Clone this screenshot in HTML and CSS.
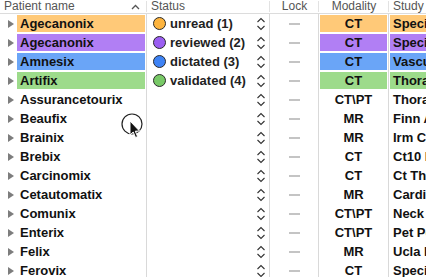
FILE: index.html
```html
<!DOCTYPE html>
<html>
<head>
<meta charset="utf-8">
<link rel="stylesheet" href="styles.css">
</head>
<body>
<div class="table">
  <div class="head">
    <div class="hc c-patient"><span>Patient name</span><svg class="sort" width="9" height="6" viewBox="0 0 9 6"><path d="M1 5 L4.5 1.5 L8 5" fill="none" stroke="#555" stroke-width="1.3"/></svg></div>
    <div class="hc c-status">Status</div>
    <div class="hc c-lock">Lock</div>
    <div class="hc c-mod">Modality</div>
    <div class="hc c-study">Study Description</div>
  </div>
  <div class="body" id="body"></div>
</div>
<svg class="cursor" width="30" height="34" viewBox="0 0 30 34">
  <circle cx="12" cy="11" r="10" fill="none" stroke="#222" stroke-width="1.2"/>
  <path d="M10 8 L10 22 L13.2 19 L15.5 24.5 L17.6 23.6 L15.3 18.2 L19.5 18 Z" fill="#111" stroke="#fff" stroke-width="1"/>
</svg>
<script src="app.js"></script>
</body>
</html>
```
FILE: app.js
```js
var rows = [
  ["Agecanonix","orange","unread (1)","CT","Special Chest"],
  ["Agecanonix","purple","reviewed (2)","CT","Special Abdomen"],
  ["Amnesix","blue","dictated (3)","CT","Vasculaire"],
  ["Artifix","green","validated (4)","CT","Thorax Abdomen"],
  ["Assurancetourix","","","CT\\PT","Thorax Pelvis"],
  ["Beaufix","","","MR","Finn Angio"],
  ["Brainix","","","MR","Irm Cérébrale"],
  ["Brebix","","","CT","Ct10 Perfusion"],
  ["Carcinomix","","","CT","Ct Thorax"],
  ["Cetautomatix","","","MR","Cardiac"],
  ["Comunix","","","CT\\PT","Neck Thorax"],
  ["Enterix","","","CT\\PT","Pet Perfusion"],
  ["Felix","","","MR","Ucla Head"],
  ["Ferovix","","","CT","Special Chest"]
];
var chev = '<svg class="step" width="10" height="14" viewBox="0 0 10 14"><path d="M1.5 5 L5 1.5 L8.5 5" fill="none" stroke="#333" stroke-width="1.1"/><path d="M1.5 9 L5 12.5 L8.5 9" fill="none" stroke="#333" stroke-width="1.1"/></svg>';
var html = "";
rows.forEach(function (r) {
  var cls = r[1] ? " " + r[1] : "";
  html += '<div class="row">' +
    '<div class="cell c-patient"><span class="tri"></span><span class="name' + cls + '">' + r[0] + '</span></div>' +
    '<div class="cell c-status">' + (r[2] ? '<span class="dot ' + r[1] + '"></span><span class="st">' + r[2] + '</span>' : '<span class="st"></span>') + chev + '</div>' +
    '<div class="cell c-lock"><span class="dash"></span></div>' +
    '<div class="cell c-mod"><span class="mod' + cls + '">' + r[3] + '</span></div>' +
    '<div class="cell c-study"><span class="study' + cls + '">' + r[4] + '</span></div>' +
    '</div>';
});
document.getElementById("body").innerHTML = html;
```
FILE: styles.css
```css
html, body {
  margin: 0;
  padding: 0;
  background: #fff;
  overflow: hidden;
}
body {
  width: 426px;
  height: 277px;
  position: relative;
  font-family: "Liberation Sans", Arial, sans-serif;
}
.table {
  width: 426px;
}
.head, .row {
  display: grid;
  grid-template-columns: 147px 123px 49px 70px 1fr;
}
.head {
  height: 13px;
  border-bottom: 1px solid #dcdcdc;
  font-size: 12px;
  color: #555;
  line-height: 13px;
}
.hc {
  display: flex;
  align-items: center;
  padding-left: 4px;
  overflow: hidden;
  white-space: nowrap;
  position: relative;
}
.hc::after {
  content: "";
  position: absolute;
  right: 0;
  top: 1px;
  bottom: 1px;
  width: 1px;
  background: #e2e2e2;
}
.hc.c-study::after { display: none; }
.hc.c-patient { justify-content: space-between; padding-right: 7px; }
.hc.c-lock { justify-content: center; padding-left: 0; }
.hc.c-mod { justify-content: center; padding-left: 0; }
.sort { margin-top: 1px; }
.row {
  height: 19px;
}
.cell {
  display: flex;
  align-items: center;
  height: 19px;
  box-sizing: border-box;
  border-right: 1px solid #d9d9d9;
  overflow: hidden;
  white-space: nowrap;
  font-size: 13px;
  font-weight: bold;
  color: #111;
}
.cell.c-study { border-right: none; }
.tri {
  width: 0;
  height: 0;
  border-top: 4.5px solid transparent;
  border-bottom: 4.5px solid transparent;
  border-left: 6px solid #7d7d7d;
  margin-left: 8px;
  margin-right: 3px;
}
.name {
  flex: 1;
  height: 17px;
  line-height: 17px;
  padding-left: 3px;
  margin-right: 1px;
}
.orange { background: #ffc978; }
.purple { background: #b17ff4; }
.blue { background: #6aa5f7; }
.green { background: #9ddb8b; }
.dot {
  width: 11px;
  height: 11px;
  border-radius: 50%;
  border: 1px solid #2a2a2a;
  margin-left: 6px;
  margin-right: 4px;
  flex: none;
}
.dot.orange { background: #fdb43e; }
.dot.purple { background: #9b5ef2; }
.dot.blue { background: #3e83f5; }
.dot.green { background: #78c967; }
.st {
  flex: 1;
  color: #222;
}
.step {
  margin-right: 3px;
  flex: none;
}
.c-lock {
  justify-content: center;
}
.dash {
  width: 11px;
  height: 2px;
  background: #c4c4c4;
  margin-left: 1px;
}
.mod {
  flex: 1;
  height: 17px;
  line-height: 17px;
  text-align: center;
  margin: 0 1px;
}
.study {
  flex: 1;
  height: 17px;
  line-height: 17px;
  padding-left: 3px;
  margin-left: 1px;
}
.cursor {
  position: absolute;
  left: 120px;
  top: 113px;
}
```
